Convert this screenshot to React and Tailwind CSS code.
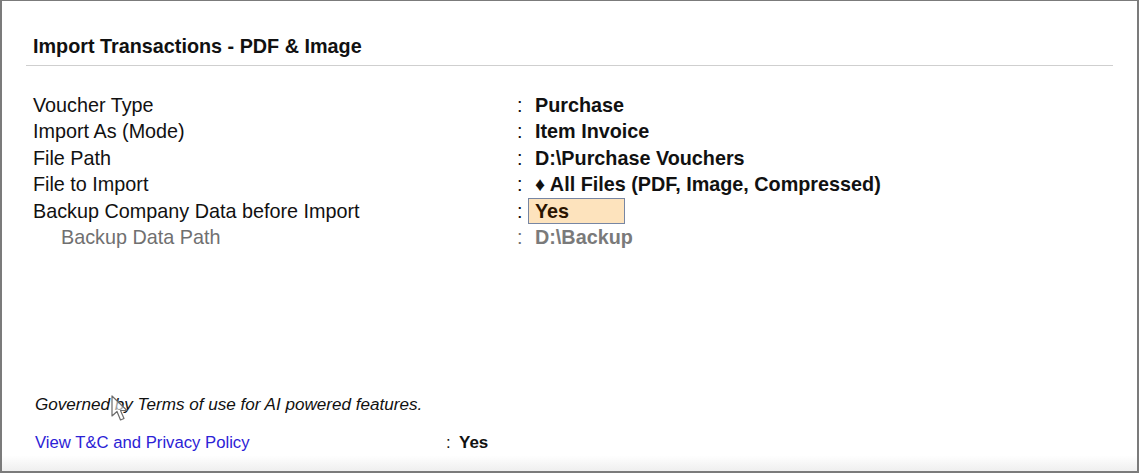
const rows = [
  { label: "Voucher Type", value: "Purchase" },
  { label: "Import As (Mode)", value: "Item Invoice" },
  { label: "File Path", value: "D:\\Purchase Vouchers" },
  { label: "File to Import", value: "♦ All Files (PDF, Image, Compressed)" },
  { label: "Backup Company Data before Import", value: "Yes", active: true },
  { label: "Backup Data Path", value: "D:\\Backup", muted: true },
];

function Cursor() {
  return (
    <svg className="absolute left-[109px] top-[394px]" width="18" height="28" viewBox="0 0 18 28">
      <path
        d="M1 1 L1 21 L6 16.5 L9.5 25 L13 23.5 L9.5 15.5 L16 15.5 Z"
        fill="#fff"
        fillOpacity="0.6"
        stroke="#6b6b6b"
        strokeWidth="1.2"
        strokeLinejoin="round"
      />
    </svg>
  );
}

export default function App() {
  return (
    <main
      className="relative flex h-[473px] w-[1139px] flex-col border-x-2 border-t border-b-2 border-[#7b7b7b] bg-white text-[#111]"
      style={{ fontFamily: '"Liberation Sans", Arial, sans-serif' }}
    >
      <h1 className="pl-[31px] pt-[32px] text-[19.8px] font-bold leading-[26px]">Import Transactions - PDF &amp; Image</h1>
      <div className="mx-[24px] mt-[6px] h-px bg-[#cfcfcf]" />

      <section className="mt-[26px] flex flex-col pl-[31px] text-[19.8px] leading-[26.4px]">
        {rows.map((r) => (
          <div key={r.label} className="flex items-center">
            <span className={r.muted ? "w-[484px] pl-[28px] text-[#707070]" : "w-[484px]"}>{r.label}</span>
            <span className={r.muted ? "w-[11px] text-[#707070]" : "w-[11px]"}>:</span>
            {r.active ? (
              <span className="flex h-[26px] w-[97px] items-center border border-[#7786a3] bg-[#fde3bd] pl-[6px] font-bold text-[#2a1400]">
                {r.value}
              </span>
            ) : (
              <span className={r.muted ? "pl-[7px] font-bold text-[#7a7a7a]" : "pl-[7px] font-bold"}>{r.value}</span>
            )}
          </div>
        ))}
      </section>

      <footer className="mt-auto flex flex-col bg-gradient-to-b from-white from-[80%] to-[#efefef] pb-[16px] pl-[33px]">
        <p className="text-[17.1px] italic leading-[24px]">Governed by Terms of use for AI powered features.</p>
        <div className="mt-[14px] flex items-center text-[16.7px] leading-[24px]">
          <span className="w-[411px] text-[#2b22d6]">View T&amp;C and Privacy Policy</span>
          <span className="w-[13px]">:</span>
          <span className="text-[17px] font-bold">Yes</span>
        </div>
      </footer>

      <Cursor />
    </main>
  );
}
